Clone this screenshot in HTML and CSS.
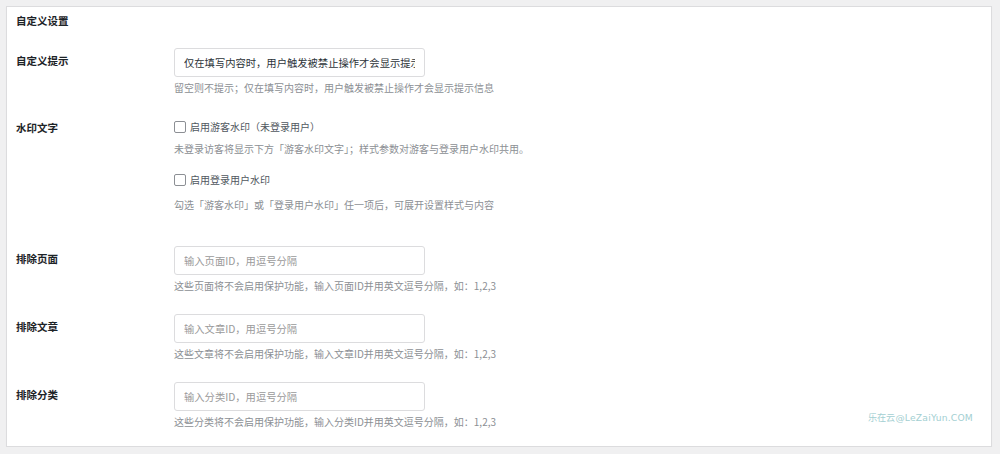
FILE: index.html
```html
<!DOCTYPE html>
<html lang="zh-CN">
<head>
  <meta charset="UTF-8">
  <title>自定义设置</title>
  <link rel="stylesheet" href="styles.css">
</head>
<body>

  <div class="card">
    <h3 class="card-title">自定义设置</h3>

    <div class="row row-tip">
      <div class="label">自定义提示</div>
      <div class="field">
        <input type="text" class="text-input" value="仅在填写内容时，用户触发被禁止操作才会显示提示信息">
        <p class="desc">留空则不提示；仅在填写内容时，用户触发被禁止操作才会显示提示信息</p>
      </div>
    </div>

    <div class="row row-mark">
      <div class="label label-check">水印文字</div>
      <div class="field">
        <label class="check"><input type="checkbox"> 启用游客水印（未登录用户）</label>
        <p class="desc desc-check">未登录访客将显示下方「游客水印文字」；样式参数对游客与登录用户水印共用。</p>
        <label class="check check-second"><input type="checkbox"> 启用登录用户水印</label>
        <p class="desc desc-note">勾选「游客水印」或「登录用户水印」任一项后，可展开设置样式与内容</p>
      </div>
    </div>

    <div class="row row-exclude">
      <div class="label">排除页面</div>
      <div class="field">
        <input type="text" class="text-input" placeholder="输入页面ID，用逗号分隔">
        <p class="desc">这些页面将不会启用保护功能，输入页面ID并用英文逗号分隔，如：1,2,3</p>
      </div>
    </div>

    <div class="row row-next">
      <div class="label">排除文章</div>
      <div class="field">
        <input type="text" class="text-input" placeholder="输入文章ID，用逗号分隔">
        <p class="desc">这些文章将不会启用保护功能，输入文章ID并用英文逗号分隔，如：1,2,3</p>
      </div>
    </div>

    <div class="row row-next">
      <div class="label">排除分类</div>
      <div class="field">
        <input type="text" class="text-input" placeholder="输入分类ID，用逗号分隔">
        <p class="desc">这些分类将不会启用保护功能，输入分类ID并用英文逗号分隔，如：1,2,3</p>
      </div>
    </div>

    <div class="watermark">乐在云@LeZaiYun.COM</div>
  </div>

</body>
</html>
```

FILE: styles.css
```css
body {
	margin: 0;
	background-color: #f0f0f1;
	font-family: "Noto Sans CJK SC", "Noto Sans", sans-serif;
	font-size: 10.5px;
	color: #1d2327;
}

.card {
	position: relative;
	margin: 6px 8px 0 6px;
	height: 441px;
	padding: 6px 9px 0 9px;
	box-sizing: border-box;
	background: #fff;
	border: 1px solid #dcdcde;
	box-shadow: 0 1px 1px rgba(0, 0, 0, 0.04);
}

.card-title {
	margin: 0;
	font-size: 10.5px;
	line-height: 16px;
	font-weight: bold;
}

.row {
	display: flex;
}

.row-tip {
	margin-top: 19px;
}

.row-mark {
	margin-top: 22px;
}

.row-exclude {
	margin-top: 33px;
}

.row-next {
	margin-top: 20px;
}

.label {
	width: 158px;
	flex-shrink: 0;
	padding-top: 5px;
	line-height: 16px;
	font-weight: bold;
}

.label.label-check {
	padding-top: 2px;
}

.field {
	display: flex;
	flex-direction: column;
	align-items: flex-start;
}

.text-input {
	width: 251px;
	height: 29px;
	box-sizing: border-box;
	margin: 0;
	padding: 0 9px;
	font-family: inherit;
	font-size: 10.3px;
	color: #2c3338;
	border: 1px solid #dcdcde;
	border-radius: 3px;
	background: #fff;
	outline: none;
}

.text-input::placeholder {
	color: #9a9a9a;
}

.desc {
	margin: 3px 0 0 0;
	font-size: 10px;
	line-height: 16px;
	color: #8c8f94;
}

.desc.desc-check {
	margin-top: 5px;
}

.desc.desc-note {
	margin-top: 8px;
}

.check {
	display: flex;
	align-items: center;
	gap: 4px;
	font-size: 10px;
	line-height: 18px;
	color: #50575e;
}

.check.check-second {
	margin-top: 14px;
}

.check input[type="checkbox"] {
	appearance: none;
	-webkit-appearance: none;
	width: 12px;
	height: 12px;
	margin: 0;
	border: 1px solid #8c8f94;
	border-radius: 2px;
	background: #fff;
}

.watermark {
	position: absolute;
	right: 18px;
	bottom: 22px;
	font-family: "DejaVu Sans", sans-serif;
	font-size: 9.2px;
	color: #a3cfd2;
	letter-spacing: 0.2px;
}
```
